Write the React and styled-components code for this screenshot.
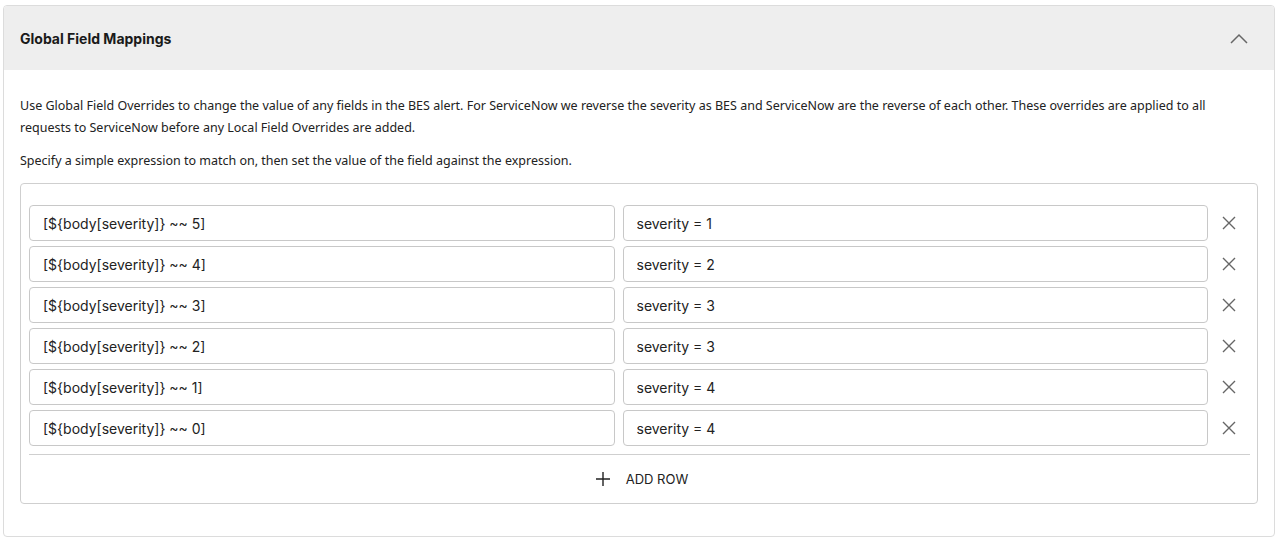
import React from 'react';
import styled, { createGlobalStyle } from 'styled-components';

const Global = createGlobalStyle`
	html, body {
		margin: 0;
		padding: 0;
		background: #fff;
	}
	body {
		font-family: "Noto Sans", "Open Sans", sans-serif;
		color: #222;
	}
`;

const Page = styled.div`
	padding: 5px 5px 6px 3px;
`;

const Card = styled.section`
	border: 1px solid #dcdcdc;
	border-radius: 4px;
	overflow: hidden;
	background: #fff;
`;

const Header = styled.header`
	display: flex;
	align-items: center;
	justify-content: space-between;
	height: 64px;
	padding: 0 26px 0 16px;
	background: #eeeeee;
`;

const Title = styled.h2`
	margin: 0;
	font-family: Inter, sans-serif;
	font-size: 14px;
	font-weight: 700;
	color: #1a1a1a;
`;

const Toggle = styled.button`
	display: flex;
	align-items: center;
	justify-content: center;
	padding: 0;
	border: none;
	background: transparent;
	cursor: pointer;
	color: #666;
`;

const Body = styled.div`
	padding: 25px 16px 32px 16px;
`;

const Text = styled.p`
	margin: 0 0 11px 0;
	font-size: 12.5px;
	line-height: 22px;
	color: #222;
`;

const Box = styled.div`
	margin-top: 11px;
	border: 1px solid #cfcfcf;
	border-radius: 4px;
	padding: 21px 7px 0 8px;
`;

const Rows = styled.div`
	display: flex;
	flex-direction: column;
	gap: 5px;
	padding-bottom: 8px;
	border-bottom: 1px solid #cfcfcf;
`;

const Row = styled.div`
	display: grid;
	grid-template-columns: 1fr 42px;
	align-items: center;
`;

const Fields = styled.div`
	display: grid;
	grid-template-columns: 1fr 1fr;
	gap: 8px;
`;

const Input = styled.input`
	box-sizing: border-box;
	width: 100%;
	height: 36px;
	padding: 0 13px;
	border: 1px solid #c8c8c8;
	border-radius: 4px;
	font-family: Inter, sans-serif;
	font-size: 14px;
	color: #222;
	background: #fff;
	outline: none;
`;

const Remove = styled.button`
	display: flex;
	align-items: center;
	justify-content: center;
	padding: 0;
	height: 36px;
	border: none;
	background: transparent;
	color: #666;
	cursor: pointer;
`;

const AddRow = styled.button`
	display: flex;
	align-items: center;
	justify-content: center;
	gap: 15px;
	width: 100%;
	height: 48px;
	padding: 0 0 0 4px;
	border: none;
	background: transparent;
	font-family: Inter, sans-serif;
	font-size: 13px;
	color: #222;
	text-transform: uppercase;
	cursor: pointer;
`;

const rows = [
	['[${body[severity]} ~~ 5]', 'severity = 1'],
	['[${body[severity]} ~~ 4]', 'severity = 2'],
	['[${body[severity]} ~~ 3]', 'severity = 3'],
	['[${body[severity]} ~~ 2]', 'severity = 3'],
	['[${body[severity]} ~~ 1]', 'severity = 4'],
	['[${body[severity]} ~~ 0]', 'severity = 4'],
];

const Chevron = () => (
	<svg width="18" height="11" viewBox="0 0 18 11" fill="none" stroke="currentColor" strokeWidth="1.5">
		<path d="M1 10 L9 2 L17 10" />
	</svg>
);

const Cross = () => (
	<svg width="16" height="16" viewBox="0 0 16 16" fill="none" stroke="currentColor" strokeWidth="1.4">
		<path d="M2 2 L14 14 M14 2 L2 14" />
	</svg>
);

const Plus = () => (
	<svg width="16" height="16" viewBox="0 0 16 16" fill="none" stroke="currentColor" strokeWidth="1.4">
		<path d="M8 1 V15 M1 8 H15" />
	</svg>
);

const App = () => {
	return (
		<Page>
			<Global />
			<Card>
				<Header>
					<Title>Global Field Mappings</Title>
					<Toggle><Chevron /></Toggle>
				</Header>
				<Body>
					<Text>
						Use Global Field Overrides to change the value of any fields in the BES alert. For ServiceNow we reverse the severity as BES and ServiceNow are the reverse of each other. These overrides are applied to all requests to ServiceNow before any Local Field Overrides are added.
					</Text>
					<Text>Specify a simple expression to match on, then set the value of the field against the expression.</Text>
					<Box>
						<Rows>
							{rows.map(([expr, value], i) => (
								<Row key={i}>
									<Fields>
										<Input defaultValue={expr} />
										<Input defaultValue={value} />
									</Fields>
									<Remove><Cross /></Remove>
								</Row>
							))}
						</Rows>
						<AddRow><Plus />Add Row</AddRow>
					</Box>
				</Body>
			</Card>
		</Page>
	);
};

export default App;
